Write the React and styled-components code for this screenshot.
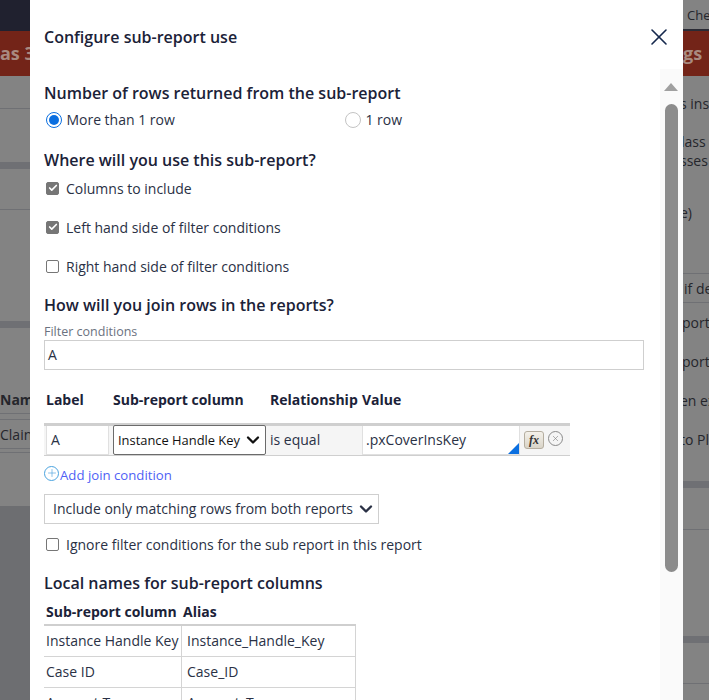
import styled, { createGlobalStyle } from "styled-components";
import { ChevronDown, Check, X, Plus } from "lucide-react";

const GlobalStyle = createGlobalStyle`
  html, body {
    margin: 0;
    height: 700px;
    overflow: hidden;
    background: #838383;
    font-family: "Open Sans", "Liberation Sans", sans-serif;
  }
  * { box-sizing: border-box; }
`

const Backdrop = styled.div`
  width: 709px;
  height: 700px;
  display: flex;
  justify-content: space-between;
  overflow: hidden;
  font-size: 14px;
  color: #25262c;
  background: #838383;
`
const LeftStrip = styled.div`
  width: 30px;
  height: 700px;
  display: flex;
  flex-direction: column;
  white-space: nowrap;
  overflow: hidden;
  background: #6d6e71;
`
const RightStrip = styled(LeftStrip)`
  width: 26px;
  background: #838383;
`
const TopBar = styled.div`
  height: 31px;
  flex: none;
  background: #20212f;
`
const CheckBar = styled.div`
  height: 31px;
  flex: none;
  padding: 5px 0 0 4px;
  line-height: 20px;
  font-size: 13px;
  background: #838383;
  border-bottom: 2px solid #2a2b35;
`
const Banner = styled.div`
  height: 45px;
  flex: none;
  line-height: 45px;
  font-size: 18px;
  font-weight: 700;
  color: #a98a80;
  background: #732418;
  padding-left: ${p => p.$indent || 0}px;
`
const LeftBody = styled.div`
  height: 430px;
  flex: none;
  background: #838383;
  display: flex;
  flex-direction: column;
`
const Block = styled.div`
  height: ${p => p.$h}px;
  flex: none;
  background: ${p => p.$fill || "transparent"};
  border-bottom: ${p => (p.$line ? "1px solid #6f7074" : "none")};
  text-indent: ${p => p.$indent || 0}px;
  line-height: ${p => p.$h}px;
  font-weight: ${p => (p.$bold ? 700 : 400)};
  overflow: hidden;
`

const Modal = styled.div`
  position: fixed;
  top: 0;
  left: 30px;
  width: 653px;
  height: 700px;
  background: #fff;
  display: flex;
  flex-direction: column;
  overflow: hidden;
  color: #1b2238;
  font-size: 14px;
`
const ModalHeader = styled.div`
  height: 69px;
  flex: none;
  display: flex;
  align-items: flex-start;
  justify-content: space-between;
  padding: 25px 14px 0 14px;
`
const Title = styled.h2`
  margin: 0;
  font-size: 16px;
  line-height: 24px;
  font-weight: 600;
`
const CloseButton = styled.button`
  width: 20px;
  height: 24px;
  padding: 0;
  border: none;
  background: none;
  color: #16294d;
  display: flex;
  align-items: center;
  justify-content: center;
  overflow: visible;
  & > svg { flex: none; }
`
const ModalBody = styled.div`
  flex: 1;
  min-height: 0;
  display: flex;
  justify-content: space-between;
`
const Content = styled.div`
  width: 614px;
  padding-left: 14px;
  overflow: hidden;
`
const Heading = styled.h3`
  margin: ${p => p.$top}px 0 0;
  font-size: 16px;
  line-height: 24px;
  font-weight: 600;
`
const RadioRow = styled.div`
  display: flex;
  height: 24px;
  margin-top: 3px;
  padding-left: 2px;
`
const RadioItem = styled.label`
  width: 300px;
  display: flex;
  align-items: center;
  gap: 4.4px;
  padding-bottom: 1px;
  color: #2a3145;
`
const RadioDot = styled.span`
  width: 16px;
  height: 16px;
  flex: none;
  border-radius: 50%;
  background: #fff;
  border: 1px solid ${p => (p.$on ? "#0b6fe0" : "#c4c4c4")};
  display: flex;
  align-items: center;
  justify-content: center;
  &::after {
    content: "";
    width: 10px;
    height: 10px;
    border-radius: 50%;
    background: ${p => (p.$on ? "#0b6fe0" : "transparent")};
  }
`
const CheckRow = styled.label`
  height: 24px;
  margin-top: ${p => p.$top}px;
  padding: 0 0 2px 2px;
  display: flex;
  align-items: center;
  gap: 7px;
  color: #2a3145;
`
const CheckBox = styled.span`
  width: 13px;
  height: 13px;
  flex: none;
  border-radius: 2px;
  border: 1px solid #767676;
  background: ${p => (p.$on ? "#767676" : "#fff")};
  color: #fff;
  display: flex;
  align-items: center;
  justify-content: center;
`
const FieldLabel = styled.div`
  margin-top: 7px;
  height: 16px;
  line-height: 16px;
  font-size: 12.5px;
  color: #6b7280;
`
const TextField = styled.div`
  width: 600px;
  height: 30px;
  border: 1px solid #cfcfcf;
  padding-left: 3px;
  line-height: 28px;
  color: #2a3145;
`
const JoinHeader = styled.div`
  margin-top: 18px;
  height: 24px;
  padding-left: 2px;
  display: grid;
  grid-template-columns: 67px 157px 92px auto;
  line-height: 24px;
  font-weight: 700;
`
const JoinRow = styled.div`
  margin-top: 11px;
  width: 526px;
  height: 33px;
  padding-left: 2px;
  display: flex;
  background: #f5f5f5;
  border-top: 3px solid #cfcfcf;
  border-bottom: 1px solid #cfcfcf;
`
const CellInput = styled.div`
  position: relative;
  width: ${p => p.$w}px;
  margin-right: ${p => p.$gap || 0}px;
  flex: none;
  height: 29px;
  background: #fff;
  border: 1px solid #e0e0e0;
  border-top: none;
  padding-left: ${p => p.$pad}px;
  line-height: 27px;
  color: #2a3145;
`
const CornerMark = styled.span`
  position: absolute;
  right: 0;
  bottom: 0;
  width: 0;
  height: 0;
  border-style: solid;
  border-width: 0 0 11px 11px;
  border-color: transparent transparent #0b6fe0 transparent;
`
const RowSelect = styled.div`
  width: 153px;
  flex: none;
  height: 30px;
  margin-top: -1px;
  border: 1px solid #6b6b6b;
  border-radius: 2px;
  background: #fff;
  padding: 0 2px 1px 4px;
  display: flex;
  align-items: center;
  justify-content: space-between;
  font-size: 12.9px;
  color: #111;
  white-space: nowrap;
  & > svg { flex: none; margin-top: 1px; }
`
const RelationCell = styled.div`
  width: 96px;
  flex: none;
  padding-left: 4px;
  line-height: 28px;
  color: #2a3145;
`
const FxButton = styled.button`
  width: 20px;
  height: 18px;
  margin: 5px 4px 0 4px;
  padding: 0;
  flex: none;
  border: 1px solid #b5aea0;
  border-radius: 3px;
  background: linear-gradient(#f4f1ea, #d9d4c8);
  font-family: "Liberation Serif", serif;
  font-style: italic;
  font-weight: 700;
  font-size: 12px;
  line-height: 15px;
  color: #333;
`
const RemoveIcon = styled.span`
  width: 15px;
  height: 15px;
  margin-top: 5px;
  flex: none;
  border: 1px solid #8a8a8a;
  border-radius: 50%;
  color: #777;
  display: flex;
  align-items: center;
  justify-content: center;
`
const AddLink = styled.div`
  margin-top: 10px;
  height: 16px;
  display: flex;
  align-items: center;
  line-height: 18px;
  font-size: 13.2px;
  color: #4f5ff5;
`
const AddLinkText = styled.span`
  position: relative;
  top: 1px;
`
const AddIcon = styled.span`
  width: 15px;
  height: 15px;
  margin: -2px 1px 0 0;
  flex: none;
  border: 1px solid #4aa3df;
  border-radius: 50%;
  color: #4aa3df;
  display: flex;
  align-items: center;
  justify-content: center;
`
const WideSelect = styled.div`
  margin-top: 12px;
  width: 335px;
  height: 30px;
  border: 1px solid #cfcfcf;
  padding: 0 2px 2px 8px;
  display: flex;
  align-items: center;
  justify-content: space-between;
  color: #2a3145;
  white-space: nowrap;
  & > svg { flex: none; margin-top: 2px; }
`
const AliasHeader = styled.div`
  margin-top: 5px;
  height: 24px;
  padding-left: 2px;
  display: grid;
  grid-template-columns: 137px auto;
  line-height: 24px;
  font-weight: 700;
`
const AliasTable = styled.div`
  width: 312px;
  border-top: 2px solid #cfcfcf;
`
const AliasRow = styled.div`
  height: 31px;
  display: grid;
  grid-template-columns: 138px 174px;
  border-bottom: 1px solid #d4d4d4;
  line-height: 29px;
  color: #2a3145;
`
const AliasName = styled.div`
  padding-left: 2px;
  border-right: 1px solid #d4d4d4;
  white-space: nowrap;
`
const AliasValue = styled.div`
  padding-left: 5px;
  border-right: 1px solid #d4d4d4;
`
const ScrollTrack = styled.div`
  width: 23px;
  flex: none;
  background: #fafafa;
  padding: 14px 0 0 4px;
`
const ScrollArrow = styled.div`
  width: 0;
  height: 0;
  border-style: solid;
  border-width: 0 7.5px 8px 7.5px;
  border-color: transparent transparent #a0a0a0 transparent;
`
const ScrollThumb = styled.div`
  width: 13px;
  height: 468px;
  margin: 13px 0 0 1px;
  border-radius: 7px;
  background: #8c8c8c;
`

const aliases = [
  ["Instance Handle Key", "Instance_Handle_Key"],
  ["Case ID", "Case_ID"],
  ["Account Type", "Account_Type"],
]

function Box({ on, top, children }) {
  return (
    <CheckRow $top={top}>
      <CheckBox $on={on}>{on && <Check size={10} strokeWidth={4} />}</CheckBox>
      {children}
    </CheckRow>
  )
}

export default function App() {
  return (
    <>
      <GlobalStyle />
      <Backdrop>
        <LeftStrip>
          <TopBar />
          <Banner>as 3</Banner>
          <LeftBody>
            <Block $h={33} $line />
            <Block $h={53} />
            <Block $h={7} $fill="#6f7074" />
            <Block $h={41} $line />
            <Block $h={111} />
            <Block $h={7} $fill="#6f7074" />
            <Block $h={57} />
            <Block $h={29} $bold $line>Nam</Block>
            <Block $h={6} $line />
            <Block $h={29} $line>Clain</Block>
            <Block $h={4} $line />
            <Block $h={53} />
          </LeftBody>
        </LeftStrip>
        <Modal>
          <ModalHeader>
            <Title>Configure sub-report use</Title>
            <CloseButton aria-label="Close"><X size={28} strokeWidth={1.4} /></CloseButton>
          </ModalHeader>
          <ModalBody>
            <Content>
              <Heading $top={12}>Number of rows returned from the sub-report</Heading>
              <RadioRow>
                <RadioItem><RadioDot $on />More than 1 row</RadioItem>
                <RadioItem><RadioDot />1 row</RadioItem>
              </RadioRow>
              <Heading $top={16}>Where will you use this sub-report?</Heading>
              <Box on top={5}>Columns to include</Box>
              <Box on top={15}>Left hand side of filter conditions</Box>
              <Box top={15}>Right hand side of filter conditions</Box>
              <Heading $top={14}>How will you join rows in the reports?</Heading>
              <FieldLabel>Filter conditions</FieldLabel>
              <TextField>A</TextField>
              <JoinHeader>
                <span>Label</span>
                <span>Sub-report column</span>
                <span>Relationship</span>
                <span>Value</span>
              </JoinHeader>
              <JoinRow>
                <CellInput $w={63} $gap={4} $pad={4}>A</CellInput>
                <RowSelect>Instance Handle Key<ChevronDown size={20} strokeWidth={2.8} /></RowSelect>
                <RelationCell>is equal</RelationCell>
                <CellInput $w={158} $pad={3}>.pxCoverInsKey<CornerMark /></CellInput>
                <FxButton>fx</FxButton>
                <RemoveIcon><X size={9} strokeWidth={1.5} /></RemoveIcon>
              </JoinRow>
              <AddLink>
                <AddIcon><Plus size={12} strokeWidth={1.3} /></AddIcon>
                <AddLinkText>Add join condition</AddLinkText>
              </AddLink>
              <WideSelect>Include only matching rows from both reports<ChevronDown size={20} strokeWidth={2.8} /></WideSelect>
              <Box top={9}>Ignore filter conditions for the sub report in this report</Box>
              <Heading $top={14}>Local names for sub-report columns</Heading>
              <AliasHeader>
                <span>Sub-report column</span>
                <span>Alias</span>
              </AliasHeader>
              <AliasTable>
                {aliases.map(([name, alias]) => (
                  <AliasRow key={alias}>
                    <AliasName>{name}</AliasName>
                    <AliasValue>{alias}</AliasValue>
                  </AliasRow>
                ))}
              </AliasTable>
            </Content>
            <ScrollTrack>
              <ScrollArrow />
              <ScrollThumb />
            </ScrollTrack>
          </ModalBody>
        </Modal>
        <RightStrip>
          <CheckBar>Che</CheckBar>
          <Banner>gs</Banner>
          <Block $h={18} />
          <Block $h={19} $indent={-3}>s ins</Block>
          <Block $h={19} />
          <Block $h={19} $indent={-2}>lass</Block>
          <Block $h={19} $indent={-3}>sses</Block>
          <Block $h={33} />
          <Block $h={19} $indent={-3}>e)</Block>
          <Block $h={52} $line />
          <Block $h={29} $line $indent={1}>if de</Block>
          <Block $h={39} $indent={-1}>port</Block>
          <Block $h={39} $indent={-1}>port</Block>
          <Block $h={39} $indent={-3}>en ex</Block>
          <Block $h={39} $indent={-3}>to Pl</Block>
          <Block $h={22} />
          <Block $h={7} $fill="#6f7074" />
          <Block $h={42} $line />
          <Block $h={106} />
          <Block $h={7} $fill="#6f7074" />
          <Block $h={41} $line />
        </RightStrip>
      </Backdrop>
    </>
  )
}
